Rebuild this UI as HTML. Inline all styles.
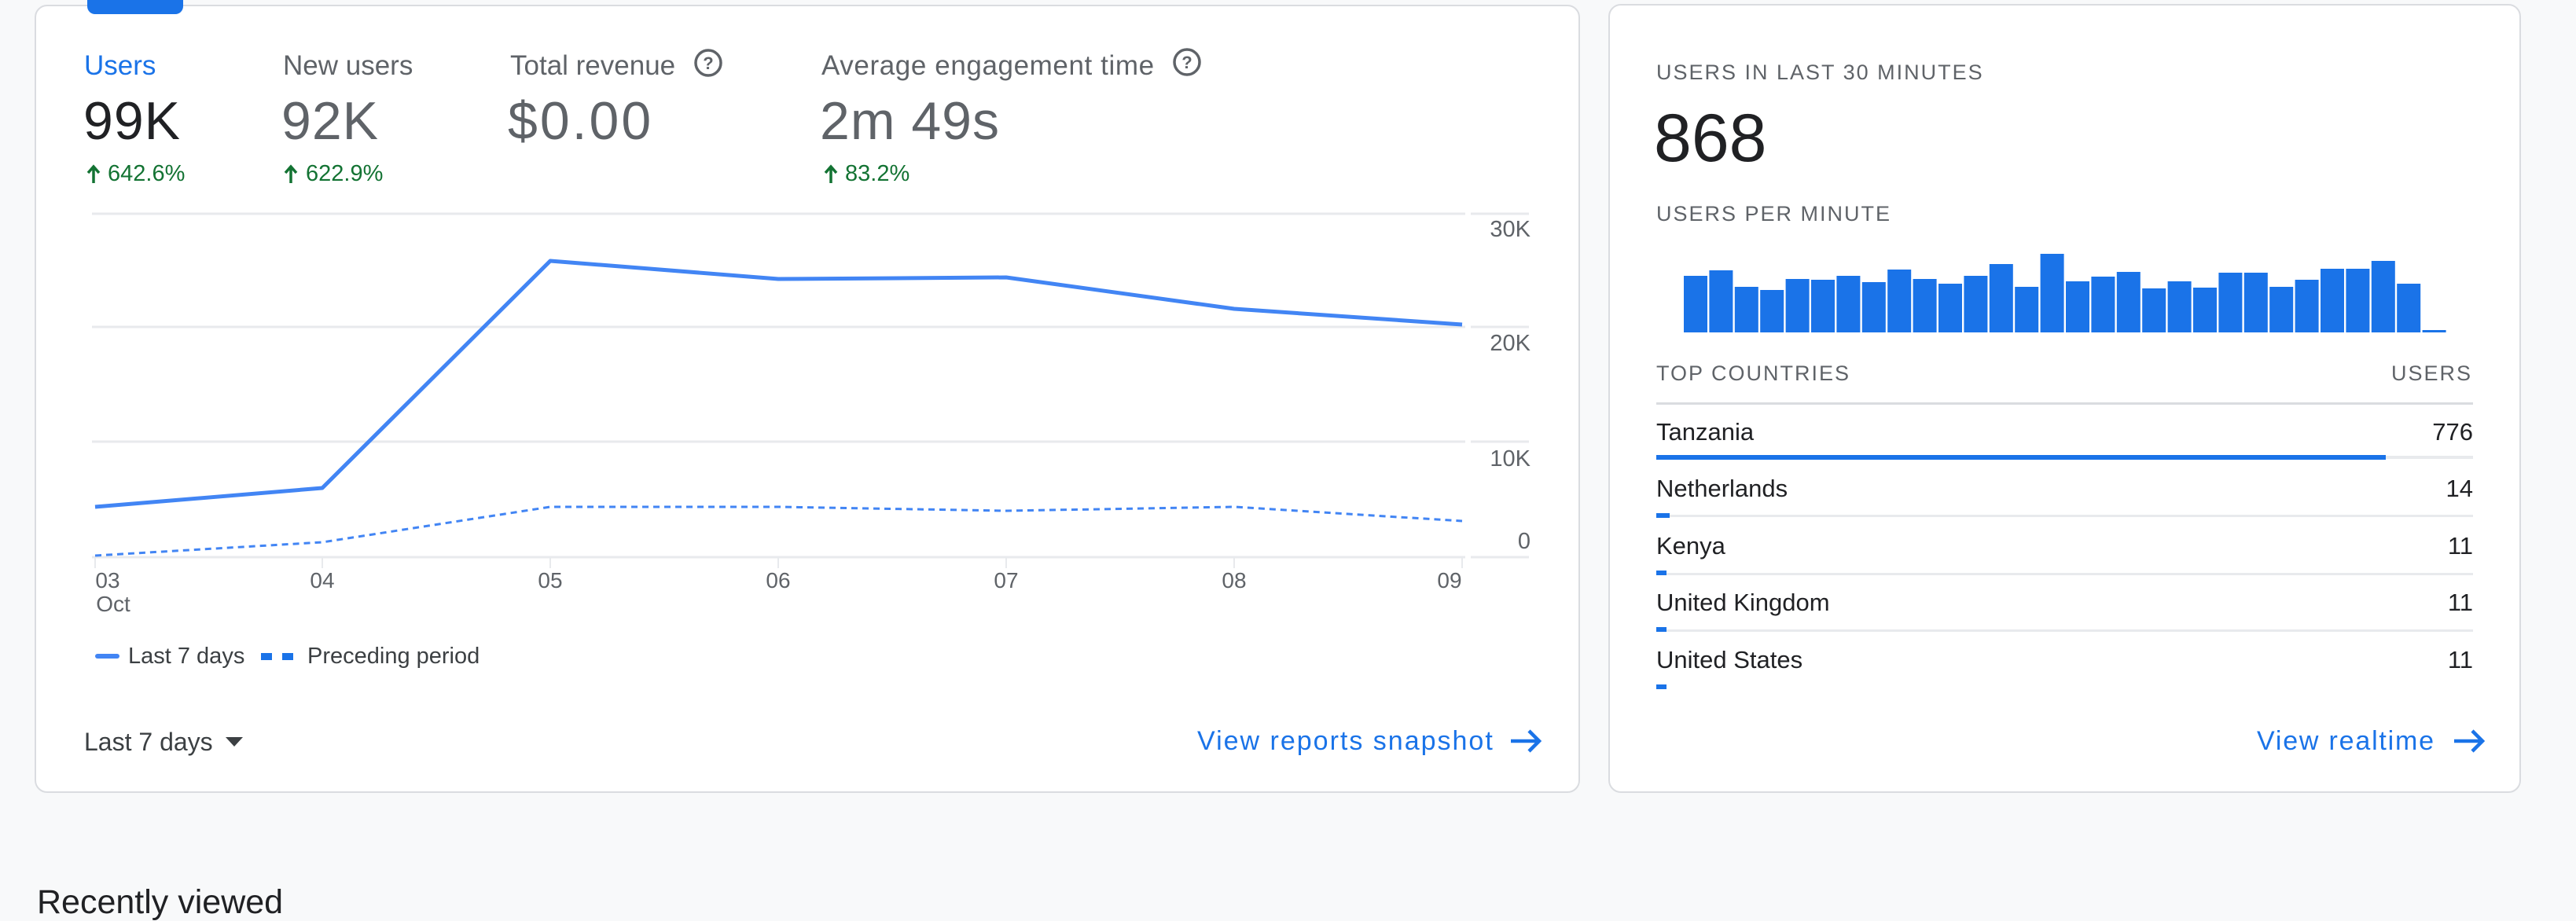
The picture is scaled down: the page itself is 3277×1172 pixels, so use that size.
<!DOCTYPE html>
<html><head><meta charset="utf-8">
<style>
*{margin:0;padding:0;box-sizing:border-box}
body{width:3277px;height:1167px;background:#f8f9fa;position:relative;overflow:hidden;font-family:"Liberation Sans",Arial,sans-serif}
.card{position:absolute;background:#fff;border:2px solid #dadce0;border-radius:16px}
.t{position:absolute;line-height:1;white-space:nowrap}
.g{color:#5f6368}
.cap{color:#5f6368;font-size:27px;letter-spacing:2px}
.pct{color:#137333;font-size:29px}
.row{color:#202124;font-size:31px}
.num{color:#202124;font-size:31px;text-align:right;width:200px}
</style></head><body>

<div class="card" style="left:44px;top:6px;width:1966px;height:1003px"></div>
<div style="position:absolute;left:111px;top:0;width:122px;height:18px;background:#1a73e8;border-radius:0 0 10px 10px"></div>

<div class="t" style="left:107px;top:66px;font-size:35px;color:#1a73e8">Users</div>
<div class="t g" style="left:360px;top:66px;font-size:35px">New users</div>
<div class="t g" style="left:649px;top:66px;font-size:35px">Total revenue</div>
<div class="t g" style="left:1045px;top:66px;font-size:35px;letter-spacing:0.6px">Average engagement time</div>
<svg style="position:absolute;left:0;top:0" width="2000" height="260">
 <g fill="none" stroke="#5f6368" stroke-width="3.5">
  <circle cx="901" cy="80" r="16"/><circle cx="1510" cy="79" r="16"/>
 </g>
 <g fill="#5f6368" font-family="Liberation Sans" font-size="22" font-weight="bold" text-anchor="middle">
  <text x="901" y="88">?</text><text x="1510" y="87">?</text>
 </g>
 <g stroke="#137333" stroke-width="3.5" fill="none">
  <path d="M119 233V213M112 220l7-8 7 8"/>
  <path d="M370 233V213M363 220l7-8 7 8"/>
  <path d="M1057 233V213M1050 220l7-8 7 8"/>
 </g>
</svg>

<div class="t" style="left:106px;top:120px;font-size:68px;color:#202124;letter-spacing:1px">99K</div>
<div class="t g" style="left:358px;top:120px;font-size:68px;letter-spacing:1px">92K</div>
<div class="t g" style="left:646px;top:120px;font-size:68px;letter-spacing:3px">$0.00</div>
<div class="t g" style="left:1043px;top:120px;font-size:68px;letter-spacing:1px">2m 49s</div>

<div class="t pct" style="left:137px;top:207px">642.6%</div>
<div class="t pct" style="left:389px;top:207px">622.9%</div>
<div class="t pct" style="left:1075px;top:207px">83.2%</div>

<svg style="position:absolute;left:0;top:0" width="2010" height="1000">
 <g stroke="#e8eaed" stroke-width="3">
  <path d="M117 272H1864M1871 272H1945M117 416H1864M1871 416H1945M117 562H1864M1871 562H1945M117 709H1864M1871 709H1945"/>
  <path d="M121 709v14M410 709v14M700 709v14M990 709v14M1280 709v14M1570 709v14M1860 709v14" stroke-width="2"/>
 </g>
 <polyline fill="none" stroke="#4285f4" stroke-width="5" stroke-linejoin="round" points="121,645 410,621 700,332 990,355 1280,353 1570,393 1860,413"/>
 <polyline fill="none" stroke="#4285f4" stroke-width="3" stroke-dasharray="8 6" points="121,707 410,690 700,645 990,645 1280,650 1570,645 1860,663"/>
 <g fill="#5f6368" font-family="Liberation Sans" font-size="29" text-anchor="end">
  <text x="1947" y="301">30K</text><text x="1947" y="446">20K</text><text x="1947" y="593">10K</text><text x="1947" y="698">0</text>
 </g>
 <g fill="#5f6368" font-family="Liberation Sans" font-size="28" text-anchor="middle">
  <text x="137" y="748">03</text><text x="410" y="748">04</text><text x="700" y="748">05</text><text x="990" y="748">06</text><text x="1280" y="748">07</text><text x="1570" y="748">08</text><text x="1844" y="748">09</text>
  <text x="144" y="778">Oct</text>
 </g>
 <rect x="121" y="832" width="31" height="6" rx="3" fill="#4285f4"/>
 <rect x="332" y="831" width="14" height="9" fill="#1a73e8"/>
 <rect x="359" y="831" width="14" height="9" fill="#1a73e8"/>
 <path d="M287 938h22l-11 12z" fill="#3c4043"/>
 <path d="M1922 943h36M1945 930l13 13-13 13" fill="none" stroke="#1a73e8" stroke-width="4.5"/>
</svg>
<div class="t" style="left:163px;top:821px;font-size:29px;color:#3c4043">Last 7 days</div>
<div class="t" style="left:391px;top:821px;font-size:29px;color:#3c4043">Preceding period</div>
<div class="t" style="left:107px;top:928px;font-size:32px;color:#3c4043">Last 7 days</div>
<div class="t" style="left:1523px;top:926px;font-size:34px;color:#1a73e8;letter-spacing:2px">View reports snapshot</div>

<div class="card" style="left:2046px;top:5px;width:1161px;height:1004px"></div>
<div class="t cap" style="left:2107px;top:79px">USERS IN LAST 30 MINUTES</div>
<div class="t" style="left:2104px;top:133px;font-size:86px;color:#202124">868</div>
<div class="t cap" style="left:2107px;top:259px">USERS PER MINUTE</div>
<svg style="position:absolute;left:2100px;top:300px" width="1100" height="130">
 <g fill="#1a73e8">
  <rect x="42" y="51" width="30" height="72"/><rect x="74.4" y="44" width="30" height="79"/><rect x="106.8" y="65" width="30" height="58"/><rect x="139.2" y="69" width="30" height="54"/><rect x="171.6" y="55" width="30" height="68"/><rect x="204" y="56" width="30" height="67"/><rect x="236.4" y="51" width="30" height="72"/><rect x="268.8" y="59" width="30" height="64"/><rect x="301.2" y="43" width="30" height="80"/><rect x="333.6" y="55" width="30" height="68"/><rect x="366" y="61" width="30" height="62"/><rect x="398.4" y="51" width="30" height="72"/><rect x="430.8" y="36" width="30" height="87"/><rect x="463.2" y="65" width="30" height="58"/><rect x="495.6" y="23" width="30" height="100"/><rect x="528" y="58" width="30" height="65"/><rect x="560.4" y="52" width="30" height="71"/><rect x="592.8" y="46" width="30" height="77"/><rect x="625.2" y="67" width="30" height="56"/><rect x="657.6" y="58" width="30" height="65"/><rect x="690" y="66" width="30" height="57"/><rect x="722.4" y="47" width="30" height="76"/><rect x="754.8" y="47" width="30" height="76"/><rect x="787.2" y="65" width="30" height="58"/><rect x="819.6" y="56" width="30" height="67"/><rect x="852" y="42" width="30" height="81"/><rect x="884.4" y="42" width="30" height="81"/><rect x="916.8" y="32" width="30" height="91"/><rect x="949.2" y="61" width="30" height="62"/><rect x="981.6" y="120" width="30" height="3"/>
 </g>
</svg>
<div class="t cap" style="left:2107px;top:462px">TOP COUNTRIES</div>
<div class="t cap" style="left:2943px;top:462px;width:202px;text-align:right;letter-spacing:2px">USERS</div>
<div style="position:absolute;left:2107px;top:512px;width:1039px;height:3px;background:#dadce0"></div>

<div class="t row" style="left:2107px;top:534px">Tanzania</div>
<div class="t num" style="left:2946px;top:534px">776</div>
<div style="position:absolute;left:2107px;top:580px;width:1039px;height:4px;background:#e8eaed"></div>
<div style="position:absolute;left:2107px;top:579px;width:928px;height:6px;background:#1a73e8"></div>

<div class="t row" style="left:2107px;top:606px">Netherlands</div>
<div class="t num" style="left:2946px;top:606px">14</div>
<div style="position:absolute;left:2107px;top:655px;width:1039px;height:3px;background:#e8eaed"></div>
<div style="position:absolute;left:2107px;top:653px;width:17px;height:6px;background:#1a73e8"></div>

<div class="t row" style="left:2107px;top:679px">Kenya</div>
<div class="t num" style="left:2946px;top:679px">11</div>
<div style="position:absolute;left:2107px;top:729px;width:1039px;height:3px;background:#e8eaed"></div>
<div style="position:absolute;left:2107px;top:726px;width:13px;height:6px;background:#1a73e8"></div>

<div class="t row" style="left:2107px;top:751px">United Kingdom</div>
<div class="t num" style="left:2946px;top:751px">11</div>
<div style="position:absolute;left:2107px;top:801px;width:1039px;height:3px;background:#e8eaed"></div>
<div style="position:absolute;left:2107px;top:798px;width:13px;height:6px;background:#1a73e8"></div>

<div class="t row" style="left:2107px;top:824px">United States</div>
<div class="t num" style="left:2946px;top:824px">11</div>
<div style="position:absolute;left:2107px;top:871px;width:13px;height:6px;background:#1a73e8"></div>

<div class="t" style="left:2871px;top:926px;font-size:34px;color:#1a73e8;letter-spacing:1.8px">View realtime</div>
<svg style="position:absolute;left:3115px;top:925px" width="50" height="40"><path d="M7 18h36M30 5l13 13-13 13" fill="none" stroke="#1a73e8" stroke-width="4.5"/></svg>

<div class="t" style="left:47px;top:1127px;font-size:43px;color:#202124">Recently viewed</div>
</body></html>
